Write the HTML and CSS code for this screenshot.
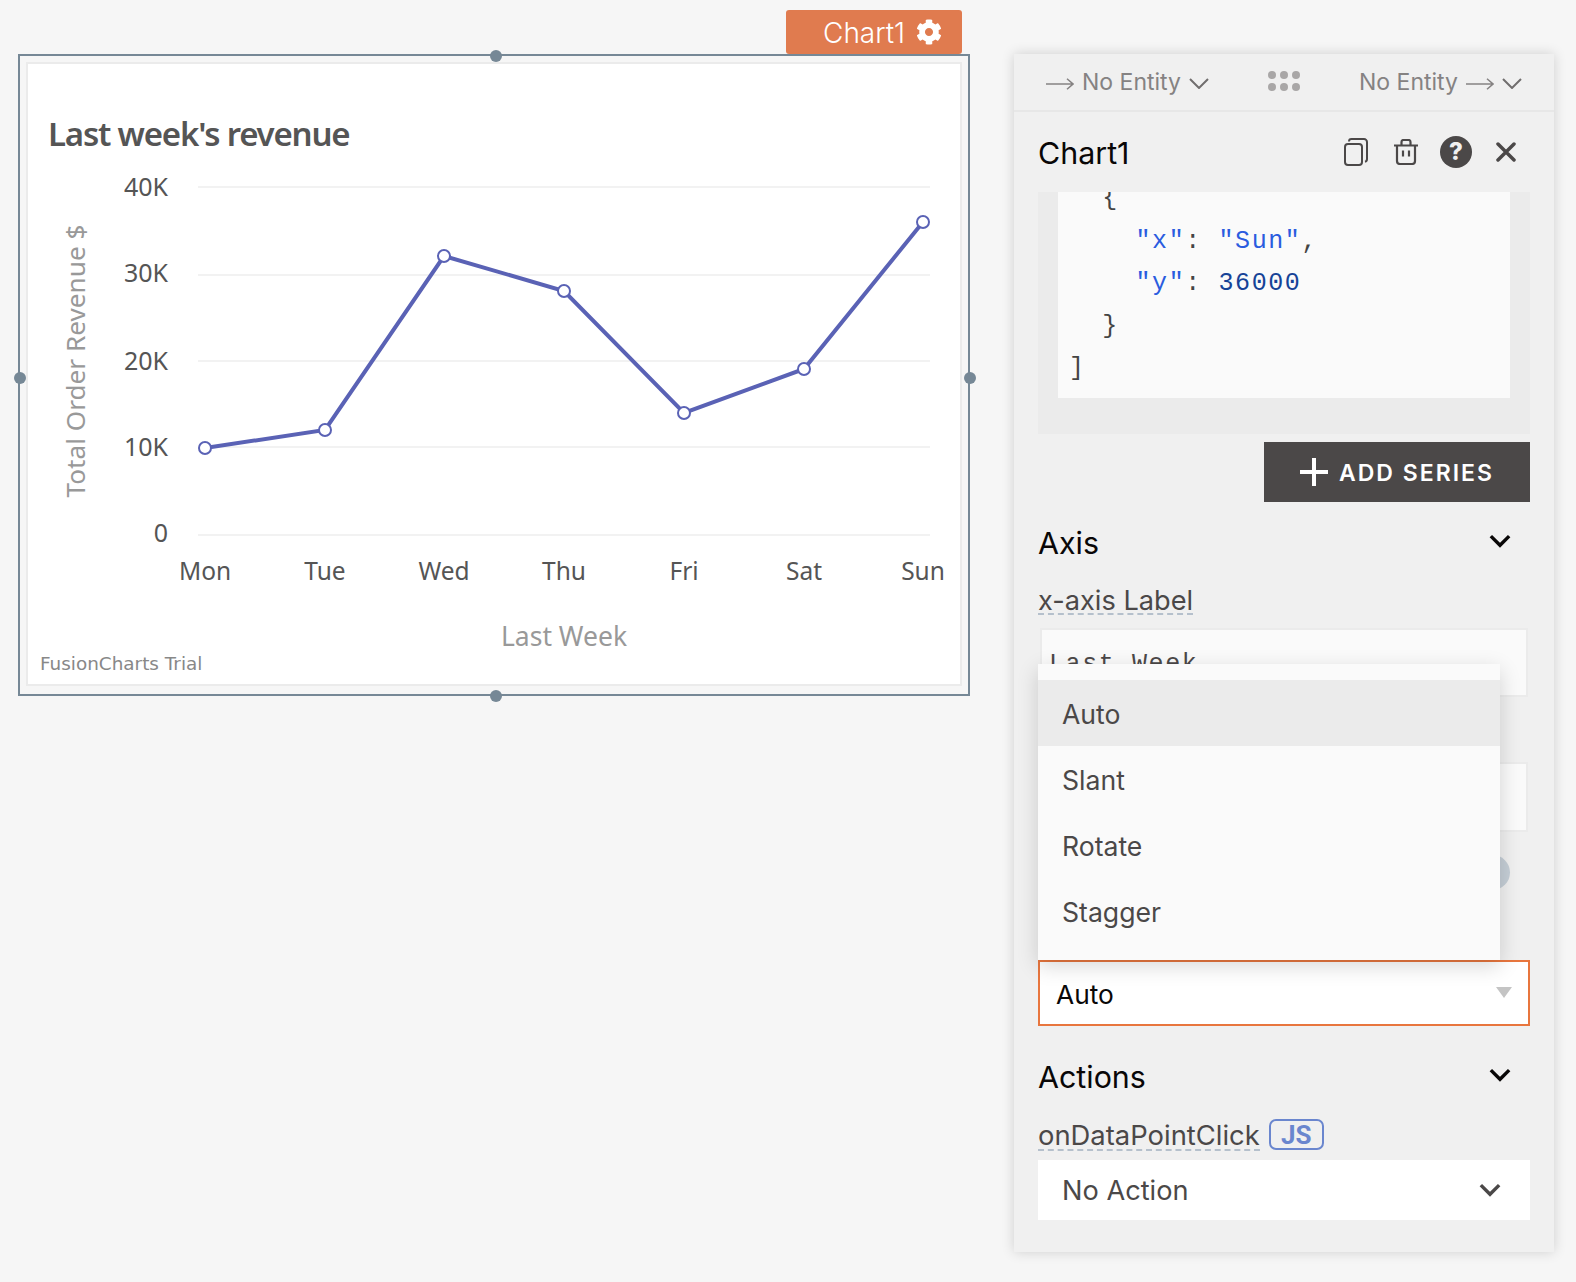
FILE: index.html
```html
<!DOCTYPE html>
<html lang="en">
<head>
<meta charset="utf-8">
<title>Chart1</title>
<link rel="stylesheet" href="styles.css">
</head>
<body>
<main class="canvas">
  <section class="frame">
    <div class="tag"><span class="tag-text">Chart1</span>
      <svg class="gear" viewBox="0 0 512 512"><path fill="#fff" d="M487.4 315.7l-42.6-24.6c4.3-23.2 4.3-47 0-70.2l42.6-24.6c4.9-2.8 7.1-8.6 5.5-14-11.1-35.6-30-67.8-54.7-94.6-3.8-4.1-10-5.1-14.8-2.3L380.8 110c-17.9-15.4-38.5-27.3-60.8-35.1V25.8c0-5.6-3.9-10.5-9.4-11.7-36.7-8.2-74.3-7.8-109.2 0-5.5 1.2-9.4 6.1-9.4 11.7V75c-22.2 7.9-42.8 19.8-60.8 35.1L88.7 85.5c-4.9-2.8-11-1.9-14.8 2.3-24.7 26.7-43.6 58.9-54.7 94.6-1.7 5.4.6 11.2 5.5 14L67.3 221c-4.3 23.2-4.3 47 0 70.2l-42.6 24.6c-4.9 2.8-7.1 8.6-5.5 14 11.1 35.6 30 67.8 54.7 94.6 3.8 4.1 10 5.1 14.8 2.3l42.6-24.6c17.9 15.4 38.5 27.3 60.8 35.1v49.2c0 5.6 3.9 10.5 9.4 11.7 36.7 8.2 74.3 7.8 109.2 0 5.5-1.2 9.4-6.1 9.4-11.7v-49.2c22.2-7.9 42.8-19.8 60.8-35.1l42.6 24.6c4.9 2.8 11 1.9 14.8-2.3 24.7-26.7 43.6-58.9 54.7-94.6 1.5-5.5-.7-11.3-5.6-14.1zM256 336c-44.1 0-80-35.9-80-80s35.9-80 80-80 80 35.9 80 80-35.9 80-80 80z"/></svg>
    </div>
    <i class="handle h-top"></i><i class="handle h-left"></i><i class="handle h-right"></i><i class="handle h-bottom"></i>
    <div class="widget">
      <svg class="chart" viewBox="28 64 932 620" width="932" height="620">
        <text class="c-title" x="48" y="146">Last week's revenue</text>
        <g class="grid">
          <line x1="198" x2="930" y1="187" y2="187"/>
          <line x1="198" x2="930" y1="275" y2="275"/>
          <line x1="198" x2="930" y1="361" y2="361"/>
          <line x1="198" x2="930" y1="447" y2="447"/>
          <line x1="198" x2="930" y1="535" y2="535"/>
        </g>
        <g class="ylab">
          <text x="168" y="196">40K</text>
          <text x="168" y="282">30K</text>
          <text x="168" y="370">20K</text>
          <text x="168" y="456">10K</text>
          <text x="168" y="542">0</text>
        </g>
        <g class="xlab">
          <text x="205" y="580">Mon</text>
          <text x="325" y="580">Tue</text>
          <text x="444" y="580">Wed</text>
          <text x="564" y="580">Thu</text>
          <text x="684" y="580">Fri</text>
          <text x="804" y="580">Sat</text>
          <text x="923" y="580">Sun</text>
        </g>
        <text class="axis-t" x="564" y="646">Last Week</text>
        <text class="axis-t axis-y" transform="translate(85 361) rotate(-90)">Total Order Revenue $</text>
        <polyline class="series" points="205,448 325,430 444,256 564,291 684,413 804,369 923,222"/>
        <g class="dots">
          <circle cx="205" cy="448" r="6"/><circle cx="325" cy="430" r="6"/><circle cx="444" cy="256" r="6"/><circle cx="564" cy="291" r="6"/><circle cx="684" cy="413" r="6"/><circle cx="804" cy="369" r="6"/><circle cx="923" cy="222" r="6"/>
        </g>
        <text class="trial" x="40" y="670">FusionCharts Trial</text>
      </svg>
    </div>
  </section>

  <aside class="panel">
    <header class="topbar">
      <div class="ent ent-left">
        <svg class="arrow" viewBox="0 0 28 12"><path d="M0 6h27M21 .8 27 6l-6 5.2"/></svg>
        <span>No Entity</span>
        <svg class="chev-thin" viewBox="0 0 20 11"><path d="M1 1l9 9 9-9"/></svg>
      </div>
      <svg class="grip" viewBox="0 0 32 20"><circle cx="4" cy="4" r="4"/><circle cx="16" cy="4" r="4"/><circle cx="28" cy="4" r="4"/><circle cx="4" cy="16" r="4"/><circle cx="16" cy="16" r="4"/><circle cx="28" cy="16" r="4"/></svg>
      <div class="ent">
        <span>No Entity</span>
        <svg class="arrow" viewBox="0 0 28 12"><path d="M0 6h27M21 .8 27 6l-6 5.2"/></svg>
        <svg class="chev-thin" viewBox="0 0 20 11"><path d="M1 1l9 9 9-9"/></svg>
      </div>
    </header>

    <div class="title-row">
      <h2 class="heading">Chart1</h2>
      <div class="tools">
        <svg class="tool copy" viewBox="0 0 24 28"><rect x="1" y="6" width="17" height="21" rx="3"/><path d="M5 3.4C5 2 6 1 7.5 1H20c1.600 0 3 1.400 3 3v17c0 1.500-.8 2.500-2 2.800"/></svg>
        <svg class="tool trash" viewBox="0 0 26 26"><path d="M1 6.500h24M4 6.500V22c0 1.700 1.300 3 3 3h12c1.700 0 3-1.300 3-3V6.500M8.500 6.500V3c0-1.100.9-2 2-2h5c1.100 0 2 .9 2 2v3.500M10 11.500v6M16 11.500v6"/></svg>
        <div class="help">?</div>
        <svg class="tool close" viewBox="0 0 20 20"><path d="M2 2l16 16M18 2 2 18"/></svg>
      </div>
    </div>

    <div class="code-wrap">
      <pre class="code"><code class="code-lines">  {
    <b class="s">"x"</b>: <b class="s">"Sun"</b>,
    <b class="s">"y"</b>: <b class="n">36000</b>
  }
]</code></pre>
    </div>

    <div class="add-row">
      <button class="add">
        <svg class="plus" viewBox="0 0 28 28"><path d="M14 0v28M0 14h28"/></svg>
        <span class="add-text">ADD SERIES</span>
      </button>
    </div>

    <div class="sec sec-axis">
      <h3 class="heading">Axis</h3>
      <svg class="chev" viewBox="0 0 20 13"><path d="M1.500 2l8.500 8.500L18.500 2"/></svg>
    </div>
    <div class="label"><span class="dash">x-axis Label</span></div>
    <div class="input input-first">Last Week</div>
    <div class="input input-second"></div>
    <div class="toggle-row"><i class="knob"></i></div>
    <div class="select">
      <span>Auto</span>
      <i class="tri"></i>
    </div>

    <div class="sec sec-actions">
      <h3 class="heading">Actions</h3>
      <svg class="chev" viewBox="0 0 20 13"><path d="M1.500 2l8.500 8.500L18.500 2"/></svg>
    </div>
    <div class="label label-js"><span class="dash">onDataPointClick</span><span class="js">JS</span></div>
    <div class="action">
      <span>No Action</span>
      <svg class="chev chev-grey" viewBox="0 0 20 13"><path d="M1.500 2l8.500 8.500L18.500 2"/></svg>
    </div>

    <ul class="menu">
      <li class="active">Auto</li>
      <li>Slant</li>
      <li>Rotate</li>
      <li>Stagger</li>
    </ul>
  </aside>
</main>
</body>
</html>
```

FILE: styles.css
```css
* { box-sizing: border-box; }
html, body { margin: 0; padding: 0; }
body { background: #f6f6f6; font-family: "Inter", "Liberation Sans", sans-serif; }
.canvas { display: flex; align-items: flex-start; width: 1576px; height: 1282px; overflow: hidden; }

/* chart widget */
.frame { position: relative; flex: none; width: 952px; height: 642px; margin: 54px 0 0 18px; border: 2px solid #768896; padding: 6px 6px 8px; }
.widget { width: 936px; height: 624px; border: 2px solid #ebebeb; background: #fff; }
.chart { display: block; }
.tag { position: absolute; top: -46px; right: 6px; width: 176px; height: 44px; display: flex; align-items: center; padding-left: 37px; gap: 11px; background: #e07b4f; border-radius: 3px; color: #fff; font-size: 28px; font-weight: 300; }
.tag-text { padding-top: 1px; }
.gear { width: 26px; height: 26px; }
.handle { position: absolute; width: 12px; height: 12px; border-radius: 50%; background: #768896; }
.h-top { top: -6px; left: 470px; }
.h-bottom { bottom: -8px; left: 470px; }
.h-left { left: -6px; top: 316px; }
.h-right { right: -8px; top: 316px; }

.chart text { font-family: "Noto Sans", "Open Sans", sans-serif; }
.c-title { font-size: 33px; font-weight: 600; fill: #555; letter-spacing: -1.200px; }
.grid line { stroke: #f2f2f2; stroke-width: 2; }
.ylab text { font-size: 25px; fill: #555; text-anchor: end; }
.xlab text { font-size: 24.500px; fill: #555; text-anchor: middle; }
.axis-t { font-size: 26.500px; fill: #999; text-anchor: middle; }
.axis-y { font-size: 26.200px; }
.series { fill: none; stroke: #5a62b5; stroke-width: 4; }
.dots circle { fill: #fff; stroke: #5a62b5; stroke-width: 2; }
.chart text.trial { font-family: "DejaVu Sans", sans-serif; font-size: 18.400px; fill: #888; }

/* panel */
.panel { position: relative; flex: none; width: 540px; height: 1198px; margin: 54px 0 0 44px; background: #f0f0f0; box-shadow: 0 0 12px rgba(0,0,0,.16); }
.topbar { height: 58px; border-bottom: 2px solid #e7e7e7; display: flex; align-items: center; justify-content: space-between; padding: 0 32px; }
.ent { display: flex; align-items: center; gap: 8px; color: #858282; font-size: 23px; width: 178px; justify-content: flex-end; }
.ent-left { justify-content: flex-start; }
.arrow { width: 28px; height: 12px; margin-top: 4px; fill: none; stroke: #858282; stroke-width: 1.500; }
.chev-thin { width: 20px; height: 11px; margin-top: 3px; fill: none; stroke: #716e6e; stroke-width: 2; }
.grip { width: 32px; height: 20px; margin-top: -2px; fill: #a9a7a7; }

.heading { margin: 0; font-size: 30.400px; font-weight: 400; color: #090707; }
.title-row { height: 80px; display: flex; align-items: center; justify-content: space-between; padding: 0 38px 0 24px; }
.title-row .heading { padding-top: 2px; }
.tools { display: flex; align-items: center; }
.tool { fill: none; stroke: #4b4848; }
.copy { width: 24px; height: 28px; stroke-width: 2; }
.trash { width: 26px; height: 26px; stroke-width: 2.200; margin-left: 25px; }
.close { width: 20px; height: 20px; stroke-width: 3.500; margin-left: 24px; stroke-linecap: round; }
.help { width: 32px; height: 32px; margin-left: 21px; border-radius: 50%; background: #4b4848; color: #f0f0f0; font-size: 24px; font-weight: 800; line-height: 32px; text-align: center; }

.code-wrap { height: 242px; margin: 0 24px; padding: 0 20px 36px; background: #ebebeb; }
.code { height: 206px; margin: 0; padding: 0 11px; overflow: hidden; background: #fafafa; color: #444; font-family: "Liberation Mono", monospace; font-size: 25px; line-height: 42.500px; letter-spacing: 1.600px; }
.code-lines { display: block; margin-top: -14px; font-family: inherit; }
.code b { font-weight: 400; }
.s { color: #2a5cdf; }
.n { color: #164397; }

.add-row { display: flex; justify-content: flex-end; padding: 8px 24px 0 0; }
.add { width: 266px; height: 60px; display: flex; align-items: center; justify-content: flex-start; gap: 11px; padding: 0 0 0 36px; border: 0; background: #4b4848; color: #fff; font-family: "Inter", sans-serif; font-size: 23px; font-weight: 600; letter-spacing: 2px; }
.add-text { padding-top: 1px; }
.plus { width: 28px; height: 28px; fill: none; stroke: #fff; stroke-width: 4; flex: none; }

.sec { display: flex; align-items: center; justify-content: space-between; height: 54px; padding: 0 44px 0 24px; }
.sec-axis { margin-top: 14px; }
.sec-actions { margin-top: 24px; }
.chev { width: 22px; height: 14px; margin: -4px -1px 0 0; fill: none; stroke: #090707; stroke-width: 3.200; }
.chev-grey { margin: 0; stroke: #4b4848; }

.label { height: 31px; margin-top: 14px; padding-left: 24px; font-size: 27.200px; color: #4b4848; line-height: 34px; display: flex; align-items: flex-start; }
.dash { display: block; height: 31px; border-bottom: 2px dashed #b5c0cc; }
.label-js { margin-top: 16px; font-size: 27.400px; line-height: 30px; }
.js { width: 55px; height: 31px; margin-left: 9px; margin-top: -1px; border: 2px solid #6a86ce; border-radius: 7px; color: #6a86ce; font-family: "Roboto", sans-serif; font-size: 26px; font-weight: 700; line-height: 28px; text-align: center; }

.input { height: 69px; margin: 0 26px; border: 2px solid #ebebeb; background: #fafafa; }
.input-first { margin-top: 13px; padding: 21px 7px 0; font-family: "Liberation Mono", monospace; font-size: 25px; line-height: 28px; letter-spacing: 1.600px; color: #4b4848; }
.input-second { height: 70px; margin-top: 65px; }
.toggle-row { display: flex; justify-content: flex-end; height: 128px; padding: 23px 44px 0 0; }
.knob { width: 35px; height: 35px; border-radius: 50%; background: #c5ced6; }
.select { height: 66px; margin: 0 24px; display: flex; align-items: center; justify-content: space-between; padding: 2px 16px 0 16px; border: 2px solid #e8763e; background: #fff; color: #090707; font-size: 26.300px; }
.tri { width: 0; height: 0; margin-bottom: 4px; border-left: 8px solid transparent; border-right: 8px solid transparent; border-top: 11px solid #c4c4c4; }
.action { height: 60px; margin: 9px 24px 0; display: flex; align-items: center; justify-content: space-between; padding: 0 29px 0 24px; background: #fff; color: #4b4848; font-size: 27.200px; }

.menu { position: absolute; top: 610px; left: 24px; width: 462px; height: 296px; margin: 0; padding: 16px 0; list-style: none; background: #fafafa; box-shadow: 0 6px 20px rgba(0,0,0,.16); color: #4b4848; font-size: 26.600px; }
.menu li { height: 66px; line-height: 69px; padding-left: 24px; }
.menu .active { background: #ebebeb; }
```
